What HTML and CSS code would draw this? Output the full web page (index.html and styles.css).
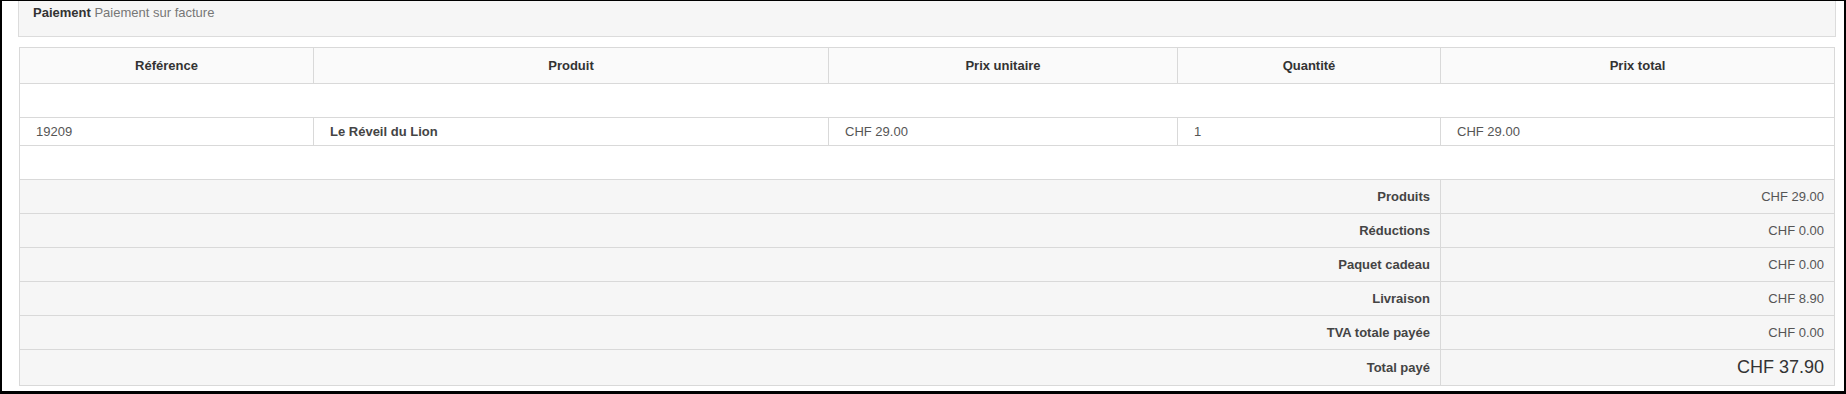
FILE: index.html
```html
<!DOCTYPE html>
<html lang="fr">
<head>
  <meta charset="UTF-8" />
  <title>Détail de la commande</title>
  <link rel="stylesheet" href="styles.css">
</head>
<body>
  <div class="frame">
    <!-- Mode de paiement -->
    <div class="payment">
      <strong>Paiement</strong> <span class="muted">Paiement sur facture</span>
    </div>

    <!-- Produits commandés + totaux -->
    <table class="order">
      <colgroup>
        <col class="col-ref">
        <col class="col-name">
        <col class="col-price">
        <col class="col-qty">
        <col class="col-total">
      </colgroup>
      <thead>
        <tr>
          <th>Référence</th>
          <th>Produit</th>
          <th>Prix unitaire</th>
          <th>Quantité</th>
          <th>Prix total</th>
        </tr>
      </thead>
      <tbody>
        <tr class="spacer"><td colspan="5">&nbsp;</td></tr>
        <tr class="item">
          <td>19209</td>
          <td class="name">Le Réveil du Lion</td>
          <td>CHF 29.00</td>
          <td>1</td>
          <td>CHF 29.00</td>
        </tr>
        <tr class="spacer"><td colspan="5">&nbsp;</td></tr>
      </tbody>
      <tfoot>
        <tr>
          <td colspan="4" class="label">Produits</td>
          <td class="amount">CHF 29.00</td>
        </tr>
        <tr>
          <td colspan="4" class="label">Réductions</td>
          <td class="amount">CHF 0.00</td>
        </tr>
        <tr>
          <td colspan="4" class="label">Paquet cadeau</td>
          <td class="amount">CHF 0.00</td>
        </tr>
        <tr>
          <td colspan="4" class="label">Livraison</td>
          <td class="amount">CHF 8.90</td>
        </tr>
        <tr>
          <td colspan="4" class="label">TVA totale payée</td>
          <td class="amount">CHF 0.00</td>
        </tr>
        <tr class="grand">
          <td colspan="4" class="label">Total payé</td>
          <td class="amount">CHF 37.90</td>
        </tr>
      </tfoot>
    </table>
  </div>
</body>
</html>
```

FILE: styles.css
```css
body {
  margin: 0;
  font-family: "Liberation Sans", Arial, sans-serif;
  font-size: 13px;
  color: #555;
  background: #fff;
}
.frame {
  box-sizing: border-box;
  width: 1846px;
  height: 394px;
  border: 2px solid #000;
  border-top-width: 1px;
  border-bottom-width: 3px;
  padding: 0 8px 0 16px;
  overflow: hidden;
}
.payment {
  background: #f6f6f6;
  border: 1px solid #dcdcdc;
  border-top: none;
  padding: 3px 14px 14px;
  line-height: 18px;
  color: #333;
}
.payment .muted {
  color: #777;
}
.order {
  width: calc(100% - 2px);
  margin: 10px 1px 0;
  border-collapse: collapse;
  table-layout: fixed;
}
.col-ref { width: 294px; }
.col-name { width: 515px; }
.col-price { width: 349px; }
.col-qty { width: 263px; }
.order th,
.order td {
  border: 1px solid #d9d9d9;
  text-align: left;
  padding: 8px 16px;
  line-height: 17px;
}
.order th {
  background: #fafafa;
  color: #333;
  text-align: center;
  padding: 8px 16px;
  line-height: 19px;
}
.order .item td {
  padding: 5px 16px;
}
.order .name {
  font-weight: bold;
  color: #444;
}
.order tfoot td {
  background: #f6f6f6;
  padding: 8px 10px;
}
.order .label {
  text-align: right;
  font-weight: bold;
  color: #444;
}
.order .amount {
  text-align: right;
}
.order .grand td {
  padding: 7px 10px;
}
.order .grand .amount {
  font-size: 18px;
  line-height: 21px;
  color: #333;
}
```
